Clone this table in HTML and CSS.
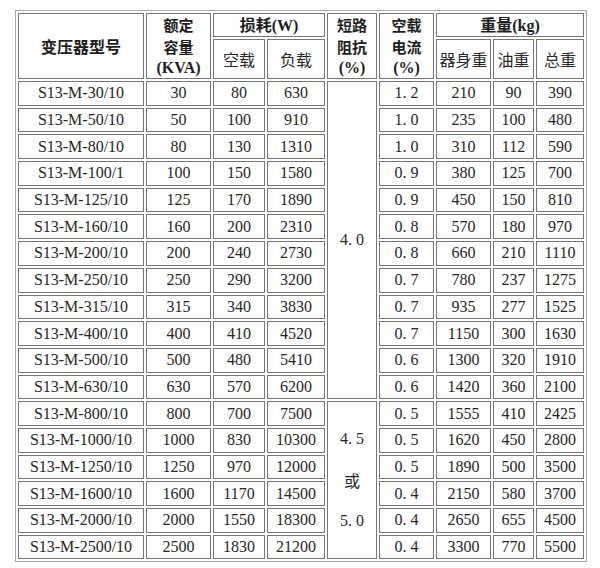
FILE: index.html
```html
<!DOCTYPE html>
<html>
<head>
<meta charset="utf-8">
<link rel="stylesheet" href="styles.css">
</head>
<body>
<table class="spec">
<colgroup>
<col class="c1"><col class="c2"><col class="c3"><col class="c4"><col class="c5"><col class="c6"><col class="c7"><col class="c8"><col class="c9">
</colgroup>
<thead>
<tr class="ha">
<th rowspan="2" class="hb">变压器型号</th>
<th rowspan="2" class="hb stack"><span class="ln">额定</span><span class="ln">容量</span><span class="ln3 lat">(KVA)</span></th>
<th colspan="2" class="hb">损耗<span class="lat">(W)</span></th>
<th rowspan="2" class="hb stack"><span class="ln">短路</span><span class="ln">阻抗</span><span class="ln3 lat">(%)</span></th>
<th rowspan="2" class="hb stack"><span class="ln">空载</span><span class="ln">电流</span><span class="ln3 lat">(%)</span></th>
<th colspan="3" class="hb">重量<span class="lat">(kg)</span></th>
</tr>
<tr class="hbrow">
<th class="sub">空载</th>
<th class="sub">负载</th>
<th class="sub">器身重</th>
<th class="sub">油重</th>
<th class="sub">总重</th>
</tr>
</thead>
<tbody>
<tr><td>S13-M-30/10</td><td>30</td><td>80</td><td>630</td><td rowspan="12" class="imp">4. 0</td><td>1. 2</td><td>210</td><td>90</td><td>390</td></tr>
<tr><td>S13-M-50/10</td><td>50</td><td>100</td><td>910</td><td>1. 0</td><td>235</td><td>100</td><td>480</td></tr>
<tr><td>S13-M-80/10</td><td>80</td><td>130</td><td>1310</td><td>1. 0</td><td>310</td><td>112</td><td>590</td></tr>
<tr><td>S13-M-100/1</td><td>100</td><td>150</td><td>1580</td><td>0. 9</td><td>380</td><td>125</td><td>700</td></tr>
<tr><td>S13-M-125/10</td><td>125</td><td>170</td><td>1890</td><td>0. 9</td><td>450</td><td>150</td><td>810</td></tr>
<tr><td>S13-M-160/10</td><td>160</td><td>200</td><td>2310</td><td>0. 8</td><td>570</td><td>180</td><td>970</td></tr>
<tr><td>S13-M-200/10</td><td>200</td><td>240</td><td>2730</td><td>0. 8</td><td>660</td><td>210</td><td>1110</td></tr>
<tr><td>S13-M-250/10</td><td>250</td><td>290</td><td>3200</td><td>0. 7</td><td>780</td><td>237</td><td>1275</td></tr>
<tr><td>S13-M-315/10</td><td>315</td><td>340</td><td>3830</td><td>0. 7</td><td>935</td><td>277</td><td>1525</td></tr>
<tr><td>S13-M-400/10</td><td>400</td><td>410</td><td>4520</td><td>0. 7</td><td>1150</td><td>300</td><td>1630</td></tr>
<tr><td>S13-M-500/10</td><td>500</td><td>480</td><td>5410</td><td>0. 6</td><td>1300</td><td>320</td><td>1910</td></tr>
<tr><td>S13-M-630/10</td><td>630</td><td>570</td><td>6200</td><td>0. 6</td><td>1420</td><td>360</td><td>2100</td></tr>
<tr><td>S13-M-800/10</td><td>800</td><td>700</td><td>7500</td><td rowspan="6" class="imp"><span class="gap">4. 5</span><span class="gap cjk">或</span><span class="gap">5. 0</span></td><td>0. 5</td><td>1555</td><td>410</td><td>2425</td></tr>
<tr><td>S13-M-1000/10</td><td>1000</td><td>830</td><td>10300</td><td>0. 5</td><td>1620</td><td>450</td><td>2800</td></tr>
<tr><td>S13-M-1250/10</td><td>1250</td><td>970</td><td>12000</td><td>0. 5</td><td>1890</td><td>500</td><td>3500</td></tr>
<tr><td>S13-M-1600/10</td><td>1600</td><td>1170</td><td>14500</td><td>0. 4</td><td>2150</td><td>580</td><td>3700</td></tr>
<tr><td>S13-M-2000/10</td><td>2000</td><td>1550</td><td>18300</td><td>0. 4</td><td>2650</td><td>655</td><td>4500</td></tr>
<tr><td>S13-M-2500/10</td><td>2500</td><td>1830</td><td>21200</td><td>0. 4</td><td>3300</td><td>770</td><td>5500</td></tr>
</tbody>
</table>
</body>
</html>
```
FILE: styles.css
```css
html, body {
  margin: 0;
  padding: 0;
  background: #ffffff;
}
body {
  padding: 10px 0 0 15px;
  font-family: "Liberation Serif", "Noto Sans CJK SC", serif;
  color: #262626;
}
.spec {
  table-layout: fixed;
  width: 572px;
  border-collapse: separate;
  border-spacing: 2px;
  border: 1px solid #a8a8a8;
}
.c1 { width: 126px; }
.c2 { width: 65px; }
.c3 { width: 52px; }
.c4 { width: 58px; }
.c5 { width: 50px; }
.c6 { width: 55px; }
.c7 { width: 55px; }
.c8 { width: 41px; }
.c9 { width: 48px; }
.spec th, .spec td {
  box-sizing: border-box;
  border: 1px solid #767676;
  padding: 0;
  text-align: center;
  vertical-align: middle;
  font-size: 16px;
  white-space: nowrap;
  overflow: hidden;
}
.spec td {
  height: 24.7px;
  line-height: 20px;
}
.hb {
  font-family: "Noto Sans CJK SC", sans-serif;
  font-weight: 700;
  color: #1e1e1e;
}
.ln {
  display: block;
  height: 22px;
  line-height: 22px;
  font-size: 15px;
}
.ln3 {
  display: block;
  height: 20px;
  line-height: 20px;
}
.lat {
  font-family: "Liberation Serif", serif;
  font-weight: 700;
}
.ha th {
  height: 22px;
  line-height: 20px;
}
.hbrow th {
  height: 40px;
}
.sub {
  font-family: "Noto Sans CJK SC", sans-serif;
  font-weight: 400;
  color: #2a2a2a;
}
.gap {
  display: block;
  height: 20px;
  line-height: 20px;
  margin: 21px 0;
}
.gap:first-child { margin-top: 0; }
.gap:last-child { margin-bottom: 0; }
.cjk {
  font-family: "Noto Sans CJK SC", sans-serif;
}
```
